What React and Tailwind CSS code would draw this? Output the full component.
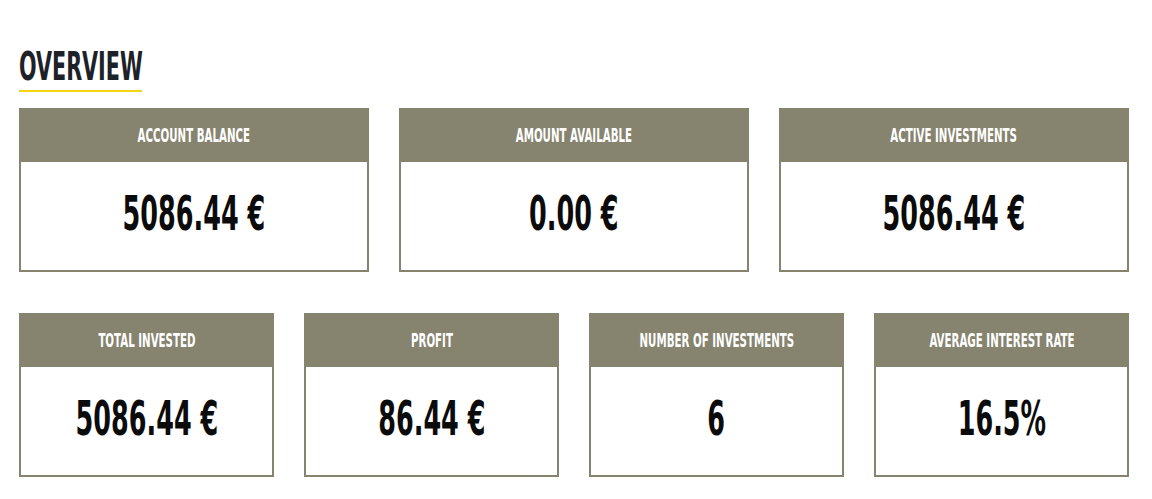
import React from 'react';

const topStats = [
  { label: 'Account Balance', value: '5086.44 €' },
  { label: 'Amount Available', value: '0.00 €' },
  { label: 'Active Investments', value: '5086.44 €' },
];

const bottomStats = [
  { label: 'Total Invested', value: '5086.44 €' },
  { label: 'Profit', value: '86.44 €' },
  { label: 'Number of Investments', value: '6' },
  { label: 'Average Interest Rate', value: '16.5%' },
];

const font = { fontFamily: "'DejaVu Sans Condensed', 'Liberation Sans', sans-serif" };

const StatCard = ({ label, value }) => (
  <div className="flex flex-col">
    <div className="h-[54px] bg-[#86836f] flex items-center justify-center">
      <span className="inline-block text-white text-[19px] font-bold uppercase leading-none scale-x-[0.6] whitespace-nowrap" style={font}>
        {label}
      </span>
    </div>
    <div className="h-[110px] border-x-2 border-b-2 border-[#86836f] bg-white flex items-center justify-center pb-[6px]">
      <span className="inline-block text-[#0b0b0b] text-[48px] font-bold leading-none scale-x-[0.59] whitespace-nowrap" style={font}>
        {value}
      </span>
    </div>
  </div>
);

export default function App() {
  return (
    <div className="min-h-screen bg-white pt-[47px] pl-[19px]">
      <div className="w-[1110px]">
        <div className="inline-block border-b-2 border-[#f3d516] pb-1">
          <h1 className="text-[39px] font-bold uppercase leading-none text-[#1d2128] inline-block origin-left scale-x-[0.59] w-[123px] whitespace-nowrap" style={font}>
            Overview
          </h1>
        </div>

        <div className="grid grid-cols-3 gap-[30px] mt-4">
          {topStats.map(s => <StatCard key={s.label} {...s} />)}
        </div>

        <div className="grid grid-cols-4 gap-[30px] mt-[41px]">
          {bottomStats.map(s => <StatCard key={s.label} {...s} />)}
        </div>
      </div>
    </div>
  );
}
